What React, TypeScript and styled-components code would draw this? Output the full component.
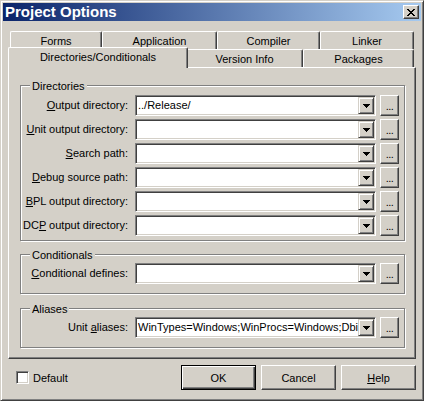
import React from "react";
import styled, { createGlobalStyle } from "styled-components";

const face = "#D4D0C8";
const shadow = "#808080";
const dark = "#404040";

const GlobalStyle = createGlobalStyle`
  html, body {
    margin: 0;
    padding: 0;
    background: ${face};
  }
  body {
    font-family: "Liberation Sans", Arial, sans-serif;
    font-size: 11px;
    color: #000;
  }
`;

const Window = styled.div`
  box-sizing: border-box;
  width: 424px;
  height: 401px;
  background: ${face};
  border: 1px solid;
  border-color: ${face} ${dark} ${dark} ${face};
  box-shadow: inset 1px 1px 0 #fff, inset -1px -1px 0 ${shadow};
  padding: 2px;
  display: flex;
  flex-direction: column;
`;

const TitleBar = styled.div`
  height: 18px;
  background: linear-gradient(to right, #0a246a, #a6caf0);
  display: flex;
  align-items: center;
  justify-content: space-between;
  padding: 0 2px;
`;

const Title = styled.div`
  color: #fff;
  font-weight: bold;
  font-size: 15px;
  line-height: 18px;
  white-space: nowrap;
`;

const CloseButton = styled.div`
  box-sizing: border-box;
  width: 16px;
  height: 14px;
  background: ${face};
  border: 1px solid;
  border-color: #fff ${dark} ${dark} #fff;
  box-shadow: inset -1px -1px 0 ${shadow};
  display: flex;
  align-items: center;
  justify-content: center;
  padding-right: 1px;
`;

const Body = styled.div`
  flex: 1;
  display: flex;
  flex-direction: column;
  padding: 10px 5px 0 5px;
`;

const TabControl = styled.div`
  display: flex;
  flex-direction: column;
`;

const TabRow = styled.div`
  height: 18px;
  display: flex;
  align-items: flex-end;
  padding-left: 2px;
`;

const Tab = styled.div<{ $w: number; $active?: boolean }>`
  box-sizing: border-box;
  flex: none;
  width: ${(p) => (p.$active ? p.$w + 4 : p.$w)}px;
  height: ${(p) => (p.$active ? 21 : 18)}px;
  margin: ${(p) => (p.$active ? "0 -2px -1px -2px" : "0")};
  position: ${(p) => (p.$active ? "relative" : "static")};
  z-index: ${(p) => (p.$active ? 2 : "auto")};
  background: ${face};
  border-top: 1px solid #fff;
  border-left: 1px solid #fff;
  border-right: 1px solid ${dark};
  box-shadow: inset -1px 0 0 ${shadow};
  border-radius: 2px 2px 0 0;
  padding-top: 1px;
  line-height: 16px;
  text-align: center;
  white-space: nowrap;
`;

const Page = styled.div`
  box-sizing: border-box;
  height: 292px;
  border: 1px solid;
  border-color: #fff ${dark} ${dark} #fff;
  box-shadow: inset -1px -1px 0 ${shadow};
  padding: 17px 10px 0 11px;
  display: flex;
  flex-direction: column;
`;

const GroupBox = styled.div<{ $gap: number }>`
  box-sizing: border-box;
  margin-top: ${(p) => p.$gap}px;
  border: 1px solid ${shadow};
  box-shadow: inset 1px 1px 0 #fff, 1px 1px 0 #fff;
  display: flex;
  flex-direction: column;
`;

const Legend = styled.div`
  align-self: flex-start;
  margin: -6px 0 0 9px;
  padding: 0 2px;
  background: ${face};
  line-height: 13px;
  white-space: nowrap;
`;

const FieldGrid = styled.div<{ $top: number; $bottom: number }>`
  display: grid;
  grid-template-columns: 110px 241px 19px;
  column-gap: 4px;
  row-gap: 3px;
  padding: ${(p) => p.$top}px 5px ${(p) => p.$bottom}px 0;
`;

const Label = styled.div`
  padding-right: 3px;
  text-align: right;
  line-height: 21px;
  white-space: nowrap;
`;

const Combo = styled.div`
  box-sizing: border-box;
  height: 21px;
  background: #fff;
  border: 1px solid;
  border-color: ${shadow} #fff #fff ${shadow};
  box-shadow: inset 1px 1px 0 ${dark}, inset -1px -1px 0 ${face};
  padding: 1px;
  display: flex;
`;

const ComboText = styled.div`
  flex: 1;
  min-width: 0;
  overflow: hidden;
  white-space: nowrap;
  padding-left: 1px;
  line-height: 17px;
`;

const DropButton = styled.div`
  box-sizing: border-box;
  flex: none;
  width: 16px;
  height: 17px;
  background: ${face};
  border: 1px solid;
  border-color: ${face} ${dark} ${dark} ${face};
  box-shadow: inset 1px 1px 0 #fff, inset -1px -1px 0 ${shadow};
  display: flex;
  align-items: center;
  justify-content: center;
`;

const Ellipsis = styled.div`
  box-sizing: border-box;
  height: 21px;
  background: ${face};
  border: 1px solid;
  border-color: #fff ${dark} ${dark} #fff;
  box-shadow: inset -1px -1px 0 ${shadow};
  text-align: center;
  line-height: 21px;
  letter-spacing: -0.5px;
`;

const Footer = styled.div`
  display: flex;
  align-items: center;
  margin-top: 6px;
  padding-left: 8px;
`;

const CheckBox = styled.div`
  box-sizing: border-box;
  width: 13px;
  height: 13px;
  background: #fff;
  border: 1px solid;
  border-color: ${shadow} #fff #fff ${shadow};
  box-shadow: inset 1px 1px 0 ${dark}, inset -1px -1px 0 ${face};
`;

const CheckLabel = styled.span`
  margin-left: 4px;
  flex: 1;
`;

const Buttons = styled.div`
  display: flex;
  gap: 5px;
`;

const PushButton = styled.div<{ $default?: boolean }>`
  box-sizing: border-box;
  width: 75px;
  height: 25px;
  background: ${face};
  border: 1px solid;
  border-color: ${(p) =>
    p.$default ? "#000" : `#fff ${dark} ${dark} #fff`};
  box-shadow: ${(p) =>
    p.$default
      ? `inset 1px 1px 0 #fff, inset -1px -1px 0 ${dark}, inset -2px -2px 0 ${shadow}`
      : `inset -1px -1px 0 ${shadow}`};
  display: flex;
  align-items: center;
  justify-content: center;
`;

const CloseGlyph = () => (
  <svg width="8" height="7" viewBox="0 0 8 7" shapeRendering="crispEdges">
    <path
      fill="#000"
      d="M0 0h2v1H0z M6 0h2v1H6z M1 1h2v1H1z M5 1h2v1H5z M2 2h4v1H2z M3 3h2v1H3z M2 4h4v1H2z M1 5h2v1H1z M5 5h2v1H5z M0 6h2v1H0z M6 6h2v1H6z"
    />
  </svg>
);

const DownArrow = () => (
  <svg width="7" height="4" viewBox="0 0 7 4" shapeRendering="crispEdges">
    <path fill="#000" d="M0 0h7v1H0z M1 1h5v1H1z M2 2h3v1H2z M3 3h1v1H3z" />
  </svg>
);

interface Field {
  label: React.ReactNode;
  value?: string;
}

const directoryFields: Field[] = [
  { label: <><u>O</u>utput directory:</>, value: "../Release/" },
  { label: <><u>U</u>nit output directory:</> },
  { label: <><u>S</u>earch path:</> },
  { label: <><u>D</u>ebug source path:</> },
  { label: <><u>B</u>PL output directory:</> },
  { label: <>DC<u>P</u> output directory:</> },
];

const FieldRows = ({ fields }: { fields: Field[] }) => (
  <>
    {fields.map((f, i) => (
      <React.Fragment key={i}>
        <Label>{f.label}</Label>
        <Combo>
          <ComboText>{f.value}</ComboText>
          <DropButton>
            <DownArrow />
          </DropButton>
        </Combo>
        <Ellipsis>...</Ellipsis>
      </React.Fragment>
    ))}
  </>
);

const App: React.FC = () => {
  return (
    <>
      <GlobalStyle />
      <Window>
        <TitleBar>
          <Title>Project Options</Title>
          <CloseButton>
            <CloseGlyph />
          </CloseButton>
        </TitleBar>
        <Body>
          <TabControl>
            <TabRow>
              <Tab $w={92}>Forms</Tab>
              <Tab $w={115}>Application</Tab>
              <Tab $w={103}>Compiler</Tab>
              <Tab $w={94}>Linker</Tab>
            </TabRow>
            <TabRow>
              <Tab $w={176} $active>Directories/Conditionals</Tab>
              <Tab $w={117}>Version Info</Tab>
              <Tab $w={111}>Packages</Tab>
            </TabRow>
            <Page>
              <GroupBox $gap={0}>
                <Legend>Directories</Legend>
                <FieldGrid $top={2} $bottom={4}>
                  <FieldRows fields={directoryFields} />
                </FieldGrid>
              </GroupBox>
              <GroupBox $gap={13}>
                <Legend>Conditionals</Legend>
                <FieldGrid $top={1} $bottom={9}>
                  <FieldRows
                    fields={[{ label: <><u>C</u>onditional defines:</> }]}
                  />
                </FieldGrid>
              </GroupBox>
              <GroupBox $gap={14}>
                <Legend>Aliases</Legend>
                <FieldGrid $top={1} $bottom={9}>
                  <FieldRows
                    fields={[
                      {
                        label: <>Unit <u>a</u>liases:</>,
                        value: "WinTypes=Windows;WinProcs=Windows;Dbi",
                      },
                    ]}
                  />
                </FieldGrid>
              </GroupBox>
            </Page>
          </TabControl>
          <Footer>
            <CheckBox />
            <CheckLabel>Default</CheckLabel>
            <Buttons>
              <PushButton $default>OK</PushButton>
              <PushButton>Cancel</PushButton>
              <PushButton>
                <span>
                  <u>H</u>elp
                </span>
              </PushButton>
            </Buttons>
          </Footer>
        </Body>
      </Window>
    </>
  );
};

export default App;
